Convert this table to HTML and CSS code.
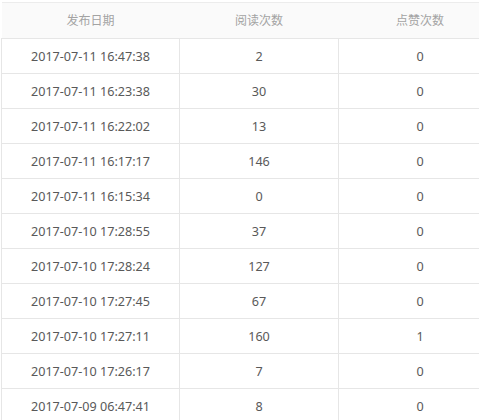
FILE: index.html
```html
<!DOCTYPE html>
<html lang="zh">
<head>
<meta charset="utf-8">
<link rel="stylesheet" href="styles.css">
</head>
<body>
<table class="grid">
  <colgroup><col class="c1"><col class="c2"><col class="c3"></colgroup>
  <thead>
    <tr><th>发布日期</th><th>阅读次数</th><th>点赞次数</th></tr>
  </thead>
  <tbody>
    <tr><td>2017-07-11 16:47:38</td><td>2</td><td>0</td></tr>
    <tr><td>2017-07-11 16:23:38</td><td>30</td><td>0</td></tr>
    <tr><td>2017-07-11 16:22:02</td><td>13</td><td>0</td></tr>
    <tr><td>2017-07-11 16:17:17</td><td>146</td><td>0</td></tr>
    <tr><td>2017-07-11 16:15:34</td><td>0</td><td>0</td></tr>
    <tr><td>2017-07-10 17:28:55</td><td>37</td><td>0</td></tr>
    <tr><td>2017-07-10 17:28:24</td><td>127</td><td>0</td></tr>
    <tr><td>2017-07-10 17:27:45</td><td>67</td><td>0</td></tr>
    <tr><td>2017-07-10 17:27:11</td><td>160</td><td>1</td></tr>
    <tr><td>2017-07-10 17:26:17</td><td>7</td><td>0</td></tr>
    <tr><td>2017-07-09 06:47:41</td><td>8</td><td>0</td></tr>
  </tbody>
</table>
</body>
</html>
```
FILE: styles.css
```css
html, body {
  margin: 0;
  padding: 0;
  background: #fff;
  overflow: hidden;
}
body {
  padding: 2px 0 0 1px;
  font-family: "Noto Sans", "Noto Sans CJK SC", sans-serif;
  font-size: 12.6px;
}
.grid {
  border-collapse: collapse;
  table-layout: fixed;
  width: 500px;
}
.c1 { width: 178px; }
.c2 { width: 159px; }
.c3 { width: 163px; }
.grid th {
  height: 35px;
  padding: 0;
  font-size: 12px;
  font-weight: normal;
  color: #a3a3a3;
  background: #fafafa;
  border-top: 1px solid #ececec;
  border-bottom: 1px solid #e6e6e6;
  text-align: center;
  line-height: 35px;
}
.grid td {
  height: 32px;
  padding: 2px 0 0;
  color: #595959;
  text-align: center;
  border: 1px solid #e6e6e6;
  line-height: 32px;
}
```
